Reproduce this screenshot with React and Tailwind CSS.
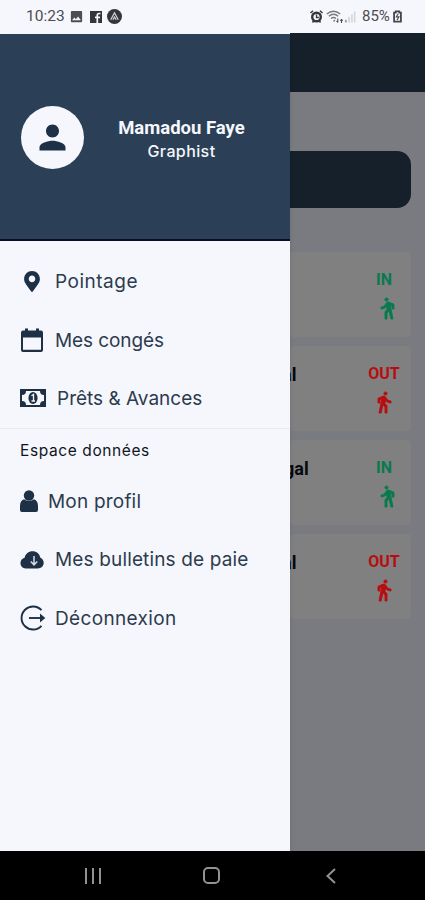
import React from 'react';
import { FaMapMarkerAlt } from 'react-icons/fa';
import { MdPerson, MdImage } from 'react-icons/md';

const CalendarIcon = () => (
  <svg viewBox="0 0 24 24" className="w-6 h-6" fill="currentColor">
    <path fillRule="evenodd" d="M3 2.5h2V.5h3v2h8V.5h3v2h2a2 2 0 0 1 2 2V22a2 2 0 0 1-2 2H3a2 2 0 0 1-2-2V4.500a2 2 0 0 1 2-2ZM3 9.500v12.200h18V9.500Z" />
  </svg>
);

const MoneyIcon = () => (
  <svg viewBox="0 0 26 18" className="w-[26px] h-[18px]">
    <path fill="currentColor" fillRule="evenodd" d="M0 0h26v18H0ZM6 2a4 4 0 0 1-4 4v6a4 4 0 0 1 4 4h14a4 4 0 0 1 4-4V6a4 4 0 0 1-4-4Z" />
    <ellipse cx="13" cy="9" rx="4.600" ry="6" fill="currentColor" />
    <path d="M11.500 6.700l2-1.200v6M11.500 12h3.500" fill="none" stroke="#f5f7fd" strokeWidth="1.300" />
  </svg>
);

const ProfileIcon = () => (
  <svg viewBox="0 0 18 22" className="w-[18px] h-[22px]" fill="currentColor">
    <circle cx="9" cy="5.500" r="5.200" />
    <path d="M4 9.300c3 2.300 7 2.300 10 0 2.800.8 4 3.500 4 7v3.700a2 2 0 0 1-2 2H2a2 2 0 0 1-2-2v-3.700c0-3.500 1.200-6.200 4-7Z" />
  </svg>
);

const CloudIcon = () => (
  <svg viewBox="0 0 24 20" className="w-6 h-5">
    <path fill="currentColor" d="M6.500 18.500C2.800 18.500.5 16.300.5 13c0-2.800 1.800-4.800 4.100-5.300C5.500 3.800 8.600 1.200 12.500 1.200c4.200 0 7.200 2.700 7.700 6.200 2.200.9 3.500 3 3.500 5.400 0 3.400-2.500 5.700-6 5.700Z" />
    <path d="M14 6v8.500M10.800 11.500L14 14.800l3.200-3.300" fill="none" stroke="#d5dae3" strokeWidth="1.500" />
  </svg>
);

const LogoutIcon = () => (
  <svg viewBox="0 0 26 26" className="w-[26px] h-[26px]" fill="none" stroke="currentColor" strokeWidth="1.900">
    <path d="M21.500 5.200A11.500 11.500 0 1 0 21.500 20.800" />
    <path d="M9 13h14" />
    <path d="M20 8.500l5.300 4.500-5.300 4.500Z" fill="currentColor" stroke="none" />
  </svg>
);

const WalkIcon = ({ className }) => (
  <svg viewBox="0 0 24 24" className={className} fill="currentColor" stroke="currentColor" strokeWidth="0.900">
    <circle cx="13.500" cy="3.500" r="1.600" />
    <path d="M9.800 8.900L7 23h2.100l1.800-8 2.100 2v6h2v-7.500l-2.100-2 .6-3C14.800 12 16.800 13 19 13v-2c-1.900 0-3.500-1-4.300-2.400l-1-1.600c-.4-.6-1-1-1.700-1-.3 0-.5.1-.8.1L6 8.300V13h2V9.600l1.800-.7" />
  </svg>
);

const StatusBar = () => (
  <div className="h-[33px] shrink-0 bg-[#f5f7fd] flex items-center justify-between pl-[26px] pr-[23px] text-[#4b4d52]">
    <div className="flex items-center">
      <span className="w-[39px] font-['Roboto',sans-serif] text-[15.500px] whitespace-nowrap">10:23</span>
      <MdImage className="w-[15px] h-[15px] ml-1" />
      <svg viewBox="0 0 12 12" className="w-3 h-3 ml-[6px]">
        <path d="M0 0h12v12H0Z" fill="#34363b" />
        <path d="M10.500 2.500H9c-1.200 0-1.700.6-1.700 1.700V12M5 6.300h5" fill="none" stroke="#f5f7fd" strokeWidth="1.700" />
      </svg>
      <svg viewBox="0 0 14 14" className="w-[15px] h-[15px] ml-[5px]">
        <circle cx="7" cy="7" r="7" fill="#34363b" />
        <path d="M3.500 10L7 3.500l3.500 6.500M5.500 10L7 7.500 8.500 10" fill="none" stroke="#cfd1d6" strokeWidth="1.200" />
      </svg>
    </div>
    <div className="flex items-center">
      <svg viewBox="0 0 13 13" className="w-[13px] h-[13px]">
        <path d="M.5 3L3 .8M12.500 3L10 .8M2.500 12.500l1.500-2M10.500 12.500L9 10.500" stroke="#34363b" strokeWidth="1.500" />
        <circle cx="6.500" cy="7" r="4.300" fill="none" stroke="#34363b" strokeWidth="2.400" />
        <path d="M6.500 4.500V7.500h2.300" fill="none" stroke="#34363b" strokeWidth="1.300" />
      </svg>
      <svg viewBox="0 0 18 14" className="w-[18px] h-[14px] ml-[3px]" fill="none" stroke="#77797e" strokeWidth="1.400">
        <path d="M.8 4C5 .5 10 .5 14.200 4M2.800 6.200c3-2.500 6.400-2.500 9.400 0M5 8.500c1.700-1.300 3.300-1.300 5 0M7.500 11.500l1.500-1.500" />
        <path d="M11.800 8.500v4M10.500 11l1.300 1.500M15.500 13V9.500M14.300 10.700l1.200-1.200 1.200 1.200" stroke="#4b4d52" strokeWidth="1.100" />
      </svg>
      <svg viewBox="0 0 13 13" className="w-[12px] h-[13px] mr-[6px]" fill="#d3d5da">
        <path d="M1 10h2v3H1Z" fill="#9b9da2" />
        <path d="M4.500 7h2v6h-2ZM7.700 4h1.700v9H7.700ZM10.700 1h1.700v12h-1.700Z" />
      </svg>
      <span className="font-['Roboto',sans-serif] text-[15px] w-[31px] whitespace-nowrap">85%</span>
      <svg viewBox="0 0 10 13" className="w-[9px] h-[13px]">
        <path d="M3 .8h4v1.500h1.800v9.900H1.200V2.300H3Z" fill="none" stroke="#44464b" strokeWidth="2" />
        <path d="M5.800 3.500L3.700 7h2.800L4.500 10.500" fill="none" stroke="currentColor" strokeWidth="1.300" />
      </svg>
    </div>
  </div>
);

const entries = [
  { status: 'IN', place: '' },
  { status: 'OUT', place: 'al', offset: '-ml-[8px]' },
  { status: 'IN', place: 'gal', offset: '-ml-[6px]' },
  { status: 'OUT', place: 'al', offset: '-ml-[8px]' },
];

const HistoryCard = ({ status, place, offset = '' }) => {
  const isIn = status === 'IN';

  return (
    <div className="h-[85px] pt-[17px] rounded-sm bg-[#808080] flex justify-between font-['Roboto',sans-serif] font-bold">
      <p className={`text-[18px] leading-[24px] text-[#08090b] ${offset}`}>{place}</p>
      <div className={`w-[54px] shrink-0 flex flex-col items-center ${isIn ? 'text-[#087a4e]' : 'text-[#b80d10]'}`}>
        <span className="text-[16px] leading-[22px]">{status}</span>
        <WalkIcon className={isIn ? 'w-6 h-6 mt-[5px] ml-[7px] -scale-x-100' : 'w-6 h-6 mt-[5px]'} />
      </div>
    </div>
  );
};

const HistoryPage = () => (
  <div className="h-full bg-[#797b80]">
    <div className="h-[59px] bg-[#15202b]" />
    <div className="pt-[59px] pr-[14px]">
      <div className="h-[57px] rounded-r-[14px] bg-[#15202b]" />
      <div className="pt-[44px] flex flex-col gap-[9px]">
        {entries.map((entry, i) => (
          <HistoryCard key={i} {...entry} />
        ))}
      </div>
    </div>
  </div>
);

const MenuItem = ({ icon, label, className = '', gap = 'w-[35px]' }) => (
  <div className="h-[58.600px] flex items-center pl-5">
    <span className={`${gap} shrink-0 flex items-center`}>{icon}</span>
    <span className={`pt-[2px] text-[19px] whitespace-nowrap text-[#2d3b4d] ${className}`}>{label}</span>
  </div>
);

const Drawer = () => (
  <aside className="w-[290px] shrink-0 flex flex-col bg-[#f5f7fd] text-[#1d3045] relative z-10 shadow-md">
    <div className="h-[207px] mt-px bg-[#2b4057] border-b-2 border-[#080d2b] flex pl-[21px]">
      <div className="w-[63px] h-[63px] mt-[72px] rounded-full bg-[#f5f7fd] flex items-center justify-center">
        <MdPerson className="w-[39px] h-[39px]" />
      </div>
      <div className="mt-[82px] ml-[34px] w-[127px] text-center text-[#f5f7fd]">
        <p className="font-['Roboto',sans-serif] font-bold text-[18.500px] leading-[24px] whitespace-nowrap">Mamadou Faye</p>
        <p className="text-[16px] leading-[22px] font-medium tracking-[0.4px]">Graphist</p>
      </div>
    </div>
    <nav className="pt-[11px]">
      <MenuItem icon={<FaMapMarkerAlt className="w-6 h-[21px]" />} label="Pointage" className="tracking-[0.5px]" />
      <MenuItem icon={<CalendarIcon />} label="Mes congés" className="-tracking-[0.1px]" />
      <MenuItem icon={<MoneyIcon />} label="Prêts & Avances" gap="w-[37px]" />
    </nav>
    <div className="border-t border-[#e9ebf0] h-[44px] pl-5 pt-[11px]">
      <p className="text-[15.500px] leading-[22px] tracking-[0.6px] text-[#10151d]">Espace données</p>
    </div>
    <nav>
      <MenuItem icon={<ProfileIcon />} label="Mon profil" gap="w-[28px]" className="tracking-[0.2px]" />
      <MenuItem icon={<CloudIcon />} label="Mes bulletins de paie" className="tracking-[0.15px]" />
      <MenuItem icon={<LogoutIcon />} label="Déconnexion" className="tracking-[0.35px]" />
    </nav>
  </aside>
);

const NavigationBar = () => (
  <div className="h-[49px] shrink-0 bg-black flex items-center text-[#929292]">
    <div className="ml-[85px] w-4 h-4 flex justify-between">
      <span className="w-[2px] bg-current" />
      <span className="w-[2px] bg-current" />
      <span className="w-[2px] bg-current" />
    </div>
    <span className="ml-[102px] w-[17px] h-[17px] border-2 border-current rounded-[5px]" />
    <svg viewBox="0 0 10 16" className="ml-[106px] w-[10px] h-4" fill="none" stroke="currentColor" strokeWidth="2">
      <path d="M9 1L1.500 8 9 15" />
    </svg>
  </div>
);

const App = () => {
  return (
    <div className="w-[425px] h-[900px] overflow-hidden flex flex-col font-['Inter',sans-serif]">
      <StatusBar />
      <div className="flex-1 min-h-0 flex">
        <Drawer />
        <main className="flex-1 min-w-0 overflow-hidden">
          <HistoryPage />
        </main>
      </div>
      <NavigationBar />
    </div>
  );
};

export default App;
